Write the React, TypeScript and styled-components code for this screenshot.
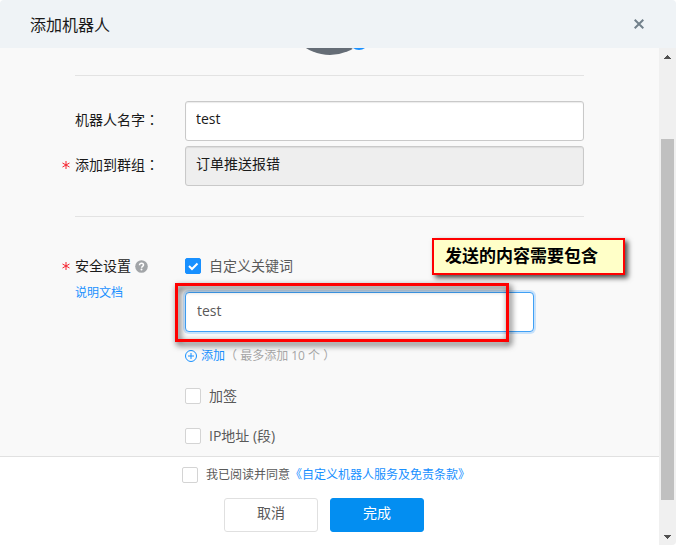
import React from 'react';
import styled, { createGlobalStyle } from 'styled-components';

const GlobalStyle = createGlobalStyle`
  * { box-sizing: border-box; }
  body {
    margin: 0;
    background: #fff;
    color: #1a1a1a;
    font: 14px/20px "Open Sans", "Noto Sans CJK SC", sans-serif;
  }
  input, button { font: inherit; color: inherit; }
`;

const Dialog = styled.main`
  display: flex;
  flex-direction: column;
  min-height: 100vh;
  border-radius: 4px;
  overflow: hidden;
  background: #fff;
`;

const Header = styled.header`
  display: flex;
  align-items: center;
  justify-content: space-between;
  height: 48px;
  padding: 0 30px;
  background: #eff3f6;
`;

const Title = styled.h1`
  margin: 2px 0 0;
  font-size: 16px;
  line-height: 24px;
  font-weight: 400;
`;

const CloseButton = styled.button`
  display: grid;
  place-items: center;
  width: 14px;
  height: 24px;
  padding: 0;
  border: 0;
  background: none;
`;

const Body = styled.div`
  flex: 1;
  display: grid;
  grid-template-columns: minmax(0, 1fr) 17px;
`;

const Main = styled.form`
  display: flex;
  flex-direction: column;
`;

const Content = styled.div`
  flex: 1;
  padding: 0 75px 10px;
  background: #f9f9f9;
`;

const AvatarRow = styled.div`
  display: flex;
  justify-content: center;
  height: 27px;
  svg { display: block; }
`;

const Divider = styled.hr`
  margin: 0;
  border: 0;
  border-top: 1px solid #e3e3e3;
`;

const Section = styled.section<{ $kind: 'basic' | 'security' }>`
  position: relative;
  display: grid;
  gap: 5px;
  padding: ${p => (p.$kind === 'basic' ? '25px 0 30px' : '39px 0 0')};
`;

const Field = styled.div`
  display: grid;
  grid-template-columns: 110px minmax(0, 1fr);
`;

const FieldLabel = styled.label`
  position: relative;
  padding: 8px 0;
`;

const SecurityLabel = styled.div`
  position: relative;
  display: flex;
  flex-direction: column;
  gap: 7px;
`;

const LabelLine = styled.div`
  display: flex;
  align-items: center;
  gap: 4px;
`;

const Required = styled.span<{ $place: 'field' | 'heading' }>`
  position: absolute;
  left: -13px;
  top: ${p => (p.$place === 'field' ? 15 : 6)}px;
  display: flex;
`;

const Colon = styled.span`
  font-family: "Noto Sans CJK TC", sans-serif;
`;

const TextInput = styled.input`
  width: 100%;
  height: 40px;
  padding: 0 10px 6px;
  border: 1px solid #c9c9c9;
  border-radius: 3px;
  background: #fff;
  box-shadow: inset 0 1px 1px rgba(0, 0, 0, 0.08);
  outline: none;
  &:disabled { background: #eee; color: #1a1a1a; }
`;

const KeywordInput = styled(TextInput)`
  padding: 0 11px 4px;
  border-color: #40a0f5;
  border-radius: 4px;
  color: #595959;
  box-shadow: 0 0 0 2px #c8e2fb;
`;

const Link = styled.a`
  color: #1890ff;
  font-size: 12px;
  line-height: 20px;
  text-decoration: none;
`;

const Options = styled.div`
  display: flex;
  flex-direction: column;
`;

const CheckLabel = styled.label<{ $small?: boolean }>`
  display: flex;
  align-items: center;
  gap: 8px;
  color: #595959;
  font-size: ${p => (p.$small ? 12 : 14)}px;
  line-height: 20px;
`;

const OptionList = styled.div`
  display: grid;
  gap: 20px;
  margin-top: 20px;
`;

const CheckCell = styled.span`
  display: grid;
  width: 16px;
  height: 16px;
  > * { grid-area: 1 / 1; }
  svg { pointer-events: none; visibility: hidden; }
  input:checked + svg { visibility: visible; }
`;

const CheckInput = styled.input`
  appearance: none;
  width: 16px;
  height: 16px;
  margin: 0;
  border: 1px solid #d4d4d4;
  border-radius: 2px;
  background: #fff;
  &:checked { background: #1890ff; border-color: #1890ff; }
`;

const KeywordBox = styled.div`
  position: relative;
  margin: 16px 50px 0 0;
`;

const Highlight = styled.div`
  position: absolute;
  inset: -9px 25px -10px -10px;
  border: 3px solid #f00;
  filter: drop-shadow(2px 3px 3px rgba(0, 0, 0, 0.8));
  pointer-events: none;
`;

const Callout = styled.div`
  position: absolute;
  top: 21px;
  right: -41px;
  width: 193px;
  padding: 5px 11px 8px;
  border: 2px solid #f00;
  background: #ffffc8;
  box-shadow: 3px 3px 5px rgba(0, 0, 0, 0.7);
  color: #000;
  font: 700 17px/20px "Noto Sans CJK SC", sans-serif;
  white-space: nowrap;
`;

const AddRow = styled.div`
  display: flex;
  align-items: center;
  margin-top: 14px;
  color: #a6a6a6;
  font-size: 12px;
  line-height: 20px;
`;

const AddButton = styled.button`
  display: flex;
  align-items: center;
  gap: 4px;
  padding: 0;
  border: 0;
  background: none;
  color: #1890ff;
`;

const Footer = styled.footer`
  display: flex;
  flex-direction: column;
  align-items: center;
  gap: 13px;
  padding: 8px 11px 13px 0;
  border-top: 1px solid #e1e1e1;
  background: #fff;
`;

const Agreement = styled.div`
  display: flex;
  align-items: center;
  padding-left: 4px;
`;

const Actions = styled.div`
  display: flex;
  gap: 12px;
`;

const ActionButton = styled.button<{ $primary?: boolean }>`
  width: 94px;
  height: 34px;
  padding: 0 0 4px;
  border: 1px solid ${p => (p.$primary ? '#038ef1' : '#e0e0e0')};
  border-radius: 3px;
  background: ${p => (p.$primary ? '#038ef1' : '#fff')};
  color: ${p => (p.$primary ? '#fff' : '#595959')};
`;

const Scrollbar = styled.div`
  display: grid;
  grid-template-rows: 17px minmax(0, 1fr) 17px;
  justify-items: center;
  align-items: center;
  background: #f0f0f0;
`;

const Track = styled.div`
  display: grid;
  grid-template-rows: 74fr 361fr 28fr;
  width: 13px;
  height: 100%;
`;

const Thumb = styled.div`
  grid-row: 2;
  background: #c0c0c0;
`;

const Star = ({ place }: { place: 'field' | 'heading' }) => (
  <Required $place={place} aria-hidden="true">
    <svg width="8" height="8" viewBox="0 0 8 8" fill="none" stroke="#f5222d">
      <path d="M4 0v8M.5 2l7 4M.5 6l7-4" />
    </svg>
  </Required>
);

const Checkbox = (props: { id: string; defaultChecked?: boolean }) => (
  <CheckCell>
    <CheckInput type="checkbox" {...props} />
    <svg width="16" height="16" viewBox="0 0 16 16" fill="none" stroke="#fff" strokeWidth="2">
      <path d="M4 8l3 3 5.5-5.5" />
    </svg>
  </CheckCell>
);

const Arrow = ({ down }: { down?: boolean }) => (
  <svg width="7" height="4" viewBox="0 0 7 4" fill="#505050" shapeRendering="crispEdges">
    <path d={down ? 'M0 0h7v1H6v1H5v1H4v1H3V3H2V2H1V1H0z' : 'M3 0h1v1h1v1h1v1h1v1H0V3h1V2h1V1h1z'} />
  </svg>
);

export default function App() {
  return (
    <>
      <GlobalStyle />
      <Dialog>
        <Header>
          <Title>添加机器人</Title>
          <CloseButton type="button" aria-label="关闭">
            <svg width="10" height="10" viewBox="0 0 10 10" fill="none" stroke="#72808b" strokeWidth="2">
              <path d="M.7.7l8.6 8.6M9.3.7L.7 9.3" />
            </svg>
          </CloseButton>
        </Header>
        <Body>
          <Main onSubmit={e => e.preventDefault()}>
            <Content>
              <AvatarRow>
                <svg width="90" height="8" viewBox="0 0 90 8" aria-hidden="true">
                  <circle cx="45" cy="-38" r="45" fill="#656d76" />
                  <circle cx="74" cy="-8" r="11" fill="#f9f9f9" />
                  <circle cx="74" cy="-8" r="10" fill="#1890ff" />
                </svg>
              </AvatarRow>
              <Divider />
              <Section $kind="basic">
                <Field>
                  <FieldLabel htmlFor="name">机器人名字<Colon>：</Colon></FieldLabel>
                  <TextInput id="name" defaultValue="test" />
                </Field>
                <Field>
                  <FieldLabel htmlFor="group">
                    <Star place="field" />添加到群组<Colon>：</Colon>
                  </FieldLabel>
                  <TextInput id="group" defaultValue="订单推送报错" disabled />
                </Field>
              </Section>
              <Divider />
              <Section $kind="security">
                <Field>
                  <SecurityLabel>
                    <Star place="heading" />
                    <LabelLine>
                      <span>安全设置</span>
                      <svg width="13" height="13" viewBox="0 0 13 13" aria-hidden="true">
                        <circle cx="6.5" cy="6.5" r="6.3" fill="#a2a5a8" />
                        <path d="M4.5 5.2c0-1.3.9-2 2-2s2 .7 2 1.8c0 1.3-1.9 1.3-1.9 2.7" fill="none" stroke="#fff" strokeWidth="1.5" />
                        <circle cx="6.5" cy="9.6" r="1" fill="#fff" />
                      </svg>
                    </LabelLine>
                    <Link href="#docs">说明文档</Link>
                  </SecurityLabel>
                  <Options>
                    <CheckLabel htmlFor="keyword"><Checkbox id="keyword" defaultChecked />自定义关键词</CheckLabel>
                    <KeywordBox>
                      <KeywordInput aria-label="自定义关键词" defaultValue="test" />
                      <Highlight />
                    </KeywordBox>
                    <AddRow>
                      <AddButton type="button">
                        <svg width="12" height="12" viewBox="0 0 12 12" fill="none" stroke="#1890ff">
                          <circle cx="6" cy="6" r="5.5" />
                          <path d="M6 3v6M3 6h6" />
                        </svg>
                        添加
                      </AddButton>
                      <span>（ 最多添加 10 个 ）</span>
                    </AddRow>
                    <OptionList>
                      <CheckLabel htmlFor="sign"><Checkbox id="sign" />加签</CheckLabel>
                      <CheckLabel htmlFor="ip"><Checkbox id="ip" />IP地址 (段)</CheckLabel>
                    </OptionList>
                  </Options>
                </Field>
                <Callout>发送的内容需要包含</Callout>
              </Section>
            </Content>
            <Footer>
              <Agreement>
                <CheckLabel htmlFor="agree" $small><Checkbox id="agree" />我已阅读并同意</CheckLabel>
                <Link href="#terms">《自定义机器人服务及免责条款》</Link>
              </Agreement>
              <Actions>
                <ActionButton type="button">取消</ActionButton>
                <ActionButton type="submit" $primary>完成</ActionButton>
              </Actions>
            </Footer>
          </Main>
          <Scrollbar aria-hidden="true">
            <Arrow />
            <Track><Thumb /></Track>
            <Arrow down />
          </Scrollbar>
        </Body>
      </Dialog>
    </>
  );
}
